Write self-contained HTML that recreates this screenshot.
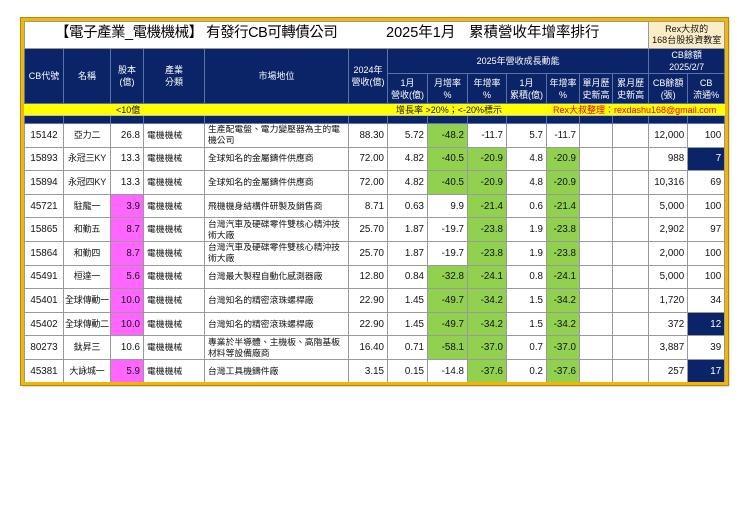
<!DOCTYPE html>
<html><head><meta charset="utf-8"><style>
*{margin:0;padding:0;box-sizing:border-box}
body{width:740px;height:523px;background:#fff;position:relative;font-family:"Liberation Sans","Noto Sans CJK TC",sans-serif;overflow:hidden}
#frame{position:absolute;left:21px;top:18px;width:707px;height:367px;border:3px solid #f2b705;box-shadow:0 0 0 1px #b08a10,1px 1px 2px #999;z-index:2;pointer-events:none}
table{position:absolute;left:24px;top:21px;border-collapse:collapse;table-layout:fixed;width:700px}
td{border:1px solid #999;font-size:9.8px;color:#111;overflow:hidden;white-space:nowrap;padding:0 3px;line-height:11px}
.h td{background:#0b2467;color:#fff;border-color:#5a72a8;text-align:center;font-size:9px;line-height:12px;white-space:normal;padding:0}
.t td{border-color:#999;background:#fff}
.d td{height:23.6px;text-align:right}
.c{text-align:center!important}
.nm{padding:0!important;font-size:9px!important;letter-spacing:-0.2px}
.l{text-align:left!important;white-space:normal!important;line-height:11px!important;font-size:8.8px!important}
.g{background:#92d050}
.m{background:#ff66ff}
.n{background:#0b2467;color:#fff}
.y td{background:#ffff00;height:12px;font-size:9px;line-height:10px;border-color:#bbb;border-left-color:#ffff00;border-right-color:#ffff00}
.s td{background:#0b2467;height:8px;border-color:#5a72a8}
.tt{position:absolute;top:6px;font-size:14.5px;color:#000;white-space:nowrap}
</style></head><body>
<div id="frame"></div>
<table>
<colgroup>
<col style="width:39px"><col style="width:47px"><col style="width:33px"><col style="width:61px"><col style="width:144px"><col style="width:39px"><col style="width:40px"><col style="width:40px"><col style="width:39px"><col style="width:40px"><col style="width:33px"><col style="width:33px"><col style="width:36px"><col style="width:39px"><col style="width:37px">
</colgroup>
<tr class="t" style="height:27px"><td colspan="13" style="position:relative;padding:0"><span class="tt" style="left:30px;letter-spacing:-0.5px">【電子產業_電機機械】 有發行CB可轉債公司</span><span class="tt" style="left:361px">2025年1月</span><span class="tt" style="left:444px">累積營收年增率排行</span></td><td colspan="2" style="background:#fbedc6;text-align:center;font-size:9px;line-height:11px;padding:0">Rex大叔的<br>168台股投資教室</td></tr>
<tr class="h" style="height:22px"><td rowspan="2">CB代號</td><td rowspan="2">名稱</td><td rowspan="2">股本<br>(億)</td><td rowspan="2">產業<br>分類</td><td rowspan="2">市場地位</td><td rowspan="2">2024年<br>營收(億)</td><td colspan="7">2025年營收成長動能</td><td colspan="2">CB餘額<br>2025/2/7</td></tr>
<tr class="h" style="height:30px"><td>1月<br>營收(億)</td><td>月增率<br>%</td><td>年增率<br>%</td><td>1月<br>累積(億)</td><td>年增率<br>%</td><td>單月歷<br>史新高</td><td>累月歷<br>史新高</td><td>CB餘額<br>(張)</td><td>CB<br>流通%</td></tr>
<tr class="y"><td colspan="2"></td><td colspan="2" style="padding-left:5px">&lt;10億</td><td colspan="2"></td><td colspan="4" style="padding-left:8px">增長率 &gt;20%；&lt;-20%標示</td><td colspan="5" style="color:#e00000;padding-left:6px">Rex大叔整理：rexdashu168@gmail.com</td></tr>
<tr class="s"><td></td><td></td><td></td><td></td><td></td><td></td><td></td><td></td><td></td><td></td><td></td><td></td><td></td><td></td><td></td></tr>
<tr class="d"><td class="c">15142</td><td class="c nm">亞力二</td><td>26.8</td><td class="l">電機機械</td><td class="l">生產配電盤、電力變壓器為主的電機公司</td><td>88.30</td><td>5.72</td><td class="g">-48.2</td><td>-11.7</td><td>5.7</td><td>-11.7</td><td></td><td></td><td>12,000</td><td>100</td></tr>
<tr class="d"><td class="c">15893</td><td class="c nm">永冠三KY</td><td>13.3</td><td class="l">電機機械</td><td class="l">全球知名的金屬鑄件供應商</td><td>72.00</td><td>4.82</td><td class="g">-40.5</td><td class="g">-20.9</td><td>4.8</td><td class="g">-20.9</td><td></td><td></td><td>988</td><td class="n">7</td></tr>
<tr class="d"><td class="c">15894</td><td class="c nm">永冠四KY</td><td>13.3</td><td class="l">電機機械</td><td class="l">全球知名的金屬鑄件供應商</td><td>72.00</td><td>4.82</td><td class="g">-40.5</td><td class="g">-20.9</td><td>4.8</td><td class="g">-20.9</td><td></td><td></td><td>10,316</td><td>69</td></tr>
<tr class="d"><td class="c">45721</td><td class="c nm">駐龍一</td><td class="m">3.9</td><td class="l">電機機械</td><td class="l">飛機機身結構件研製及銷售商</td><td>8.71</td><td>0.63</td><td>9.9</td><td class="g">-21.4</td><td>0.6</td><td class="g">-21.4</td><td></td><td></td><td>5,000</td><td>100</td></tr>
<tr class="d"><td class="c">15865</td><td class="c nm">和勤五</td><td class="m">8.7</td><td class="l">電機機械</td><td class="l">台灣汽車及硬碟零件雙核心精沖技術大廠</td><td>25.70</td><td>1.87</td><td>-19.7</td><td class="g">-23.8</td><td>1.9</td><td class="g">-23.8</td><td></td><td></td><td>2,902</td><td>97</td></tr>
<tr class="d"><td class="c">15864</td><td class="c nm">和勤四</td><td class="m">8.7</td><td class="l">電機機械</td><td class="l">台灣汽車及硬碟零件雙核心精沖技術大廠</td><td>25.70</td><td>1.87</td><td>-19.7</td><td class="g">-23.8</td><td>1.9</td><td class="g">-23.8</td><td></td><td></td><td>2,000</td><td>100</td></tr>
<tr class="d"><td class="c">45491</td><td class="c nm">桓達一</td><td class="m">5.6</td><td class="l">電機機械</td><td class="l">台灣最大製程自動化感測器廠</td><td>12.80</td><td>0.84</td><td class="g">-32.8</td><td class="g">-24.1</td><td>0.8</td><td class="g">-24.1</td><td></td><td></td><td>5,000</td><td>100</td></tr>
<tr class="d"><td class="c">45401</td><td class="c nm">全球傳動一</td><td class="m">10.0</td><td class="l">電機機械</td><td class="l">台灣知名的精密滾珠螺桿廠</td><td>22.90</td><td>1.45</td><td class="g">-49.7</td><td class="g">-34.2</td><td>1.5</td><td class="g">-34.2</td><td></td><td></td><td>1,720</td><td>34</td></tr>
<tr class="d"><td class="c">45402</td><td class="c nm">全球傳動二</td><td class="m">10.0</td><td class="l">電機機械</td><td class="l">台灣知名的精密滾珠螺桿廠</td><td>22.90</td><td>1.45</td><td class="g">-49.7</td><td class="g">-34.2</td><td>1.5</td><td class="g">-34.2</td><td></td><td></td><td>372</td><td class="n">12</td></tr>
<tr class="d"><td class="c">80273</td><td class="c nm">鈦昇三</td><td>10.6</td><td class="l">電機機械</td><td class="l">專業於半導體、主機板、高階基板材料等設備廠商</td><td>16.40</td><td>0.71</td><td class="g">-58.1</td><td class="g">-37.0</td><td>0.7</td><td class="g">-37.0</td><td></td><td></td><td>3,887</td><td>39</td></tr>
<tr class="d"><td class="c">45381</td><td class="c nm">大詠城一</td><td class="m">5.9</td><td class="l">電機機械</td><td class="l">台灣工具機鑄件廠</td><td>3.15</td><td>0.15</td><td>-14.8</td><td class="g">-37.6</td><td>0.2</td><td class="g">-37.6</td><td></td><td></td><td>257</td><td class="n">17</td></tr>
</table>
</body></html>
